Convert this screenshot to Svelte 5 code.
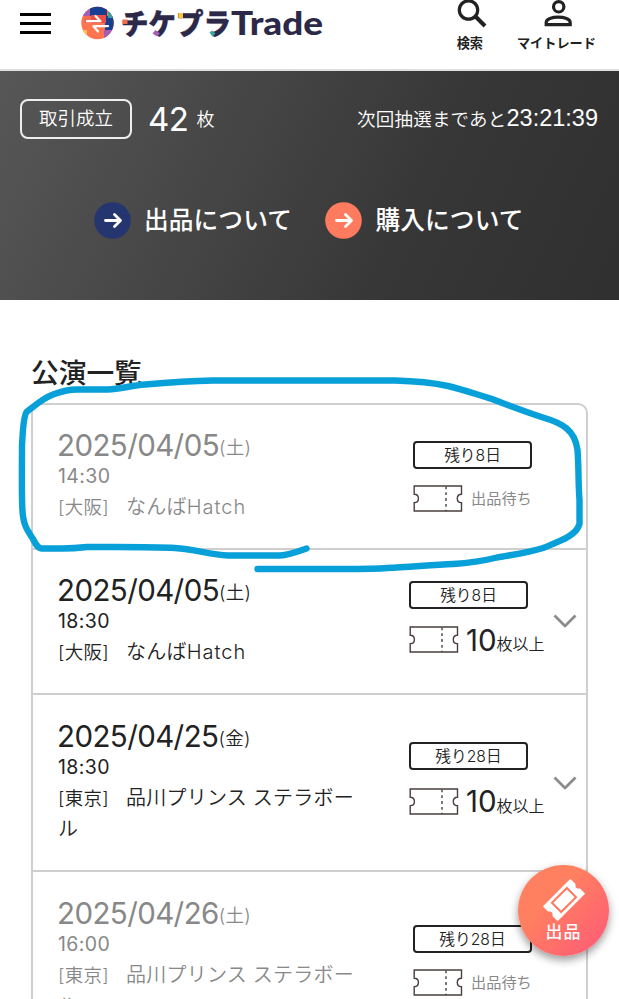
<script>
  const shows = [
    { date: '2025/04/05', day: '土', time: '14:30', area: '大阪', venue: 'なんば', latin: 'Hatch', left: 8, open: false },
    { date: '2025/04/05', day: '土', time: '18:30', area: '大阪', venue: 'なんば', latin: 'Hatch', left: 8, open: true },
    { date: '2025/04/25', day: '金', time: '18:30', area: '東京', venue: '品川プリンス ステラボール', left: 28, open: true },
    { date: '2025/04/26', day: '土', time: '16:00', area: '東京', venue: '品川プリンス ステラボール', left: 28, open: false }
  ];
</script>

{#snippet ticket()}
  <svg class="ticket" width="50" height="27" viewBox="0 0 50 27" fill="none" stroke="#4a3f3d" stroke-width="1.4">
    <path d="M1.200 1H48.500V9.300C45.500 9.300 44.300 11.300 44.300 13.500S45.500 17.700 48.500 17.700V26H1.200V17.700C4.200 17.700 5.400 15.700 5.400 13.500S4.200 9.300 1.200 9.300Z" />
    <path d="M33 1.500V26" stroke-dasharray="2.800 3" />
  </svg>
{/snippet}

{#snippet arrow(color)}
  <svg width="37" height="37" viewBox="0 0 37 37">
    <circle cx="18.5" cy="18.5" r="18.3" fill={color} />
    <path d="M11.500 18.500H26M20.500 12.500L26.500 18.500L20.500 24.500" fill="none" stroke="#fff" stroke-width="2.8" stroke-linecap="round" stroke-linejoin="round" />
  </svg>
{/snippet}

<div class="page">
  <header>
    <div class="burger"><i></i><i></i><i></i></div>
    <svg class="logo" width="246" height="40" viewBox="0 0 246 40">
      <defs><clipPath id="disc"><circle cx="17.5" cy="20" r="16.2" /></clipPath></defs>
      <g clip-path="url(#disc)">
        <rect width="36" height="40" fill="#ff7550" />
        <path d="M0 3H11V13H0Z" fill="#a45db5" />
        <path d="M10 3H27V13H10Z" fill="#173f91" />
        <path d="M25 13H35V27H25Z" fill="#173f91" />
        <path d="M28 9H35V15H28Z" fill="#3d9da0" />
        <path d="M4 13H11V20H4Z" fill="#f16b52" />
        <path d="M11 12H26V20H11Z" fill="#e94d43" />
        <path d="M0 27H7V37H0Z" fill="#ffc44f" />
        <path d="M24 27H35V37H24Z" fill="#a45db5" />
      </g>
      <path d="M7 18.200H20.500L15.500 13M28 23.200H13.500L18 28.500" fill="none" stroke="#fff" stroke-width="2.2" stroke-linecap="round" stroke-linejoin="round" />
      <text class="kana" x="41" y="31.5" textLength="110" lengthAdjust="spacingAndGlyphs">チケプラ</text>
      <text class="latin" x="151" y="32" textLength="92" lengthAdjust="spacingAndGlyphs">Trade</text>
      <path d="M42.500 16.500H47.500V21H42.500Z" fill="#f06b50" />
      <path d="M75.500 27L80 30.500L77 33.500L72.500 30.500Z" fill="#a45db5" />
      <path d="M98.500 10H103V15H98.500Z" fill="#fcc243" />
      <path d="M132 27.500L135.500 30.500L132.500 33.500L129.500 29.500Z" fill="#3da5a5" />
    </svg>
    <nav>
      <div class="tool search">
        <svg width="30" height="28" viewBox="0 0 30 28" fill="none" stroke="#222"><circle cx="11.5" cy="10" r="9.200" stroke-width="3.2" /><path d="M18 16L28 26" stroke-width="4" /></svg>
        <span>検索</span>
      </div>
      <div class="tool mine">
        <svg width="28" height="28" viewBox="0 0 28 28" fill="none" stroke="#222" stroke-width="3.2"><circle cx="14.7" cy="6.800" r="5.200" /><path d="M2.200 24.700H26.200V22.500C26.200 15.200 2.200 15.200 2.200 22.500Z" /></svg>
        <span>マイトレード</span>
      </div>
    </nav>
  </header>

  <section class="hero">
    <div class="stats">
      <span class="deal">取引成立</span>
      <span class="count">42</span>
      <span class="unit">枚</span>
      <span class="next">次回抽選まであと<b>23:21:39</b></span>
    </div>
    <div class="links">
      <span class="link">{@render arrow('#24356f')}<em>出品について</em></span>
      <span class="link">{@render arrow('#ff7b60')}<em>購入について</em></span>
    </div>
  </section>

  <main>
    <h2>公演一覧</h2>
    <ul>
      {#each shows as s}
        <li class:open={s.open}>
          <div class="info">
            <div class="date">{s.date}<small>({s.day})</small></div>
            <div class="time">{s.time}</div>
            <div class="venue"><span class="area">[{s.area}]</span>{s.venue}{#if s.latin}<span class="latin-name">{s.latin}</span>{/if}</div>
          </div>
          <div class="status">
            <div class="badge">残り{s.left}日</div>
            <div class="stock">
              {@render ticket()}
              {#if s.open}
                <span class="num">10</span><span class="more">枚以上</span>
              {:else}
                <span class="wait">出品待ち</span>
              {/if}
            </div>
          </div>
          {#if s.open}
            <svg class="chev" width="24" height="15" viewBox="0 0 24 15" fill="none" stroke="#8c8c8c" stroke-width="2.800"><path d="M1.500 1.500L12 12L22.500 1.500" stroke-linejoin="round" /></svg>
          {/if}
        </li>
      {/each}
    </ul>
  </main>

  <svg class="marker" width="619" height="999" viewBox="0 0 619 999" fill="none" stroke="#07a0d8" stroke-width="6.400" stroke-linecap="round" stroke-linejoin="round">
    <path d="M306.500 548.500C299 551 291 555 280 555.500H228C210 555 195 549 175 548C150 546.500 110 547 87 547C78 548 70 548.500 62 548.500H42C38 548.500 36 545 33 539C27 530 23 525 22.300 508C21.500 490 22 465 22 445C23 430 23 418 26.500 412C33 407 43 398 53 394.500C62 391 70 389.500 77 389.500H108C120 389 132 385.500 145 384.500C168 382.500 190 381 213 380.500H395C415 381 432 382.500 448 386C465 390 478 395 492 399C510 406 526 412 543 417.500C562 423 575 430 577.500 450C579 470 578 480 579.500 500V524C576 536 560 541 543 548C528 553 510 555 497 557.500C483 561 470 563 453 564C432 565 408 567 387 568C377 569 350 569 340 569H257.500" />
  </svg>

  <button class="fab">
    <svg width="42" height="42" viewBox="0 0 42 42">
      <g transform="rotate(-45 21 21)">
        <path d="M2.500 11.500H39.500V17.500A4 4 0 0 0 39.500 24.500V30.500H2.500V24.500A4 4 0 0 0 2.500 17.500Z" fill="#fff" stroke="#fff" stroke-width="2" stroke-linejoin="round" />
        <rect x="10.500" y="14.500" width="21" height="13" fill="none" stroke="#ff7860" stroke-width="2" />
      </g>
    </svg>
    <span>出品</span>
  </button>
</div>

<style>
  :global(body) { margin: 0; background: #fff; }
  .page {
    position: relative; width: 619px; height: 999px; overflow: hidden; background: #fff; color: #222;
    font-family: Inter, 'Noto Sans CJK JP', sans-serif;
  }
  header { box-sizing: border-box; height: 71px; border-bottom: 2px solid #dde0de; display: flex; align-items: flex-start; }
  .burger { margin: 13px 0 0 20px; width: 31px; display: flex; flex-direction: column; gap: 6px; }
  .burger i { height: 3px; background: #000; }
  .logo { margin: 3px 0 0 29px; overflow: visible; }
  .kana { font: 900 29px 'Noto Sans CJK JP', sans-serif; fill: #2c2848; stroke: #2c2848; stroke-width: .4px; }
  .latin { font: 900 32px Lato, sans-serif; fill: #2c2848; }
  nav { display: flex; margin-left: auto; margin-right: 23px; }
  .tool { display: flex; flex-direction: column; align-items: center; font-weight: 700; font-size: 13.200px; line-height: 18px; }
  .tool span { margin-top: 6px; white-space: nowrap; }
  .search { margin-right: 30px; }
  .search svg { margin-left: 4px; }
  .mine svg { margin-left: 3px; }
  .hero { height: 229px; background: linear-gradient(115deg, #575757 0%, #464646 35%, #363636 68%, #303030 100%); color: #fff; overflow: hidden; }
  .stats { display: flex; align-items: center; height: 40px; margin: 28px 21px 0 20px; }
  .deal { box-sizing: border-box; width: 112px; height: 40px; border: 2px solid #eee; border-radius: 8px; text-align: center; font-size: 18.500px; line-height: 35px; font-weight: 350; }
  .count { font-size: 33px; margin-left: 16px; letter-spacing: -0.500px; }
  .unit { font-size: 18px; font-weight: 350; margin: -2px 0 0 8px; }
  .next { margin: -2px 0 0 auto; font-size: 18.500px; font-weight: 350; letter-spacing: .2px; white-space: nowrap; }
  .next b { font: 400 23.500px 'Liberation Sans', sans-serif; letter-spacing: 0; }
  .links { display: flex; margin: 63px 0 0 94px; gap: 33.500px; }
  .link { display: flex; align-items: center; height: 37px; }
  em { font: 500 24.700px/37px 'Noto Sans CJK JP', sans-serif; margin: -5px 0 0 13px; letter-spacing: .1px; }
  main { padding: 0 31px 0 32px; }
  h2 { margin: 53px 0 0 -1px; height: 50px; font-size: 27.700px; line-height: 40px; font-weight: 500; }
  ul { list-style: none; margin: 0 0 0 -1px; padding: 0; border: 2px solid #cfcfcf; border-radius: 10px; height: 660px; }
  li { display: flex; align-items: center; padding: 26px 54px 25px 25px; border-bottom: 2px solid #cfcfcf; }
  li:first-child, li:nth-child(2) { padding-top: 25px; }
  li.open { padding-right: 10px; }
  .info { width: 306px; color: #888; }
  .open .info { color: #222; }
  .info > div { line-height: 31px; }
  .date { font-size: 29.500px; white-space: nowrap; height: 31px; letter-spacing: -.6px; margin-left: -1px; }
  .date small { font-size: 18.500px; font-weight: 350; letter-spacing: .3px; position: relative; top: -2px; }
  .time { font-size: 19.500px; height: 31px; letter-spacing: .4px; }
  .venue { font-size: 20px; font-weight: 350; letter-spacing: .25px; }
  .area { font-size: 18.500px; margin-right: 17px; }
  .latin-name { letter-spacing: 1px; }
  .status { margin-left: auto; width: 119px; color: #222; }
  .open .status { width: 137px; margin-left: 0; flex: none; margin-right: 7px; }
  .open .info { width: 307px; margin-right: 44px; flex: none; }
  .badge { box-sizing: border-box; width: 119px; height: 28px; border: 2px solid #222; border-radius: 4px; font-size: 15.700px; line-height: 25px; text-align: center; font-weight: 350; }
  .stock { display: flex; align-items: center; margin-top: 16px; height: 27px; white-space: nowrap; }
  .open .stock { margin-top: 8px; height: 46px; }
  .ticket { flex: none; }
  .wait { font-size: 15.200px; color: #888; margin: -3px 0 0 8px; }
  .num { font-size: 29.500px; margin-left: 7px; }
  .more { font-size: 16px; padding-top: 7px; font-weight: 350; }
  .chev { flex: none; }
  .marker { position: absolute; left: 0; top: 0; pointer-events: none; }
  .fab {
    position: absolute; left: 518px; top: 865px; width: 91px; height: 91px; padding: 14px 0 0; border: 0; border-radius: 50%;
    display: flex; flex-direction: column; align-items: center; color: #fff;
    background: linear-gradient(135deg, #ff8060 35%, #ff5878 100%); box-shadow: 0 4px 8px rgba(0, 0, 0, .4);
    font: 500 17px/20px 'Noto Sans CJK JP', sans-serif; letter-spacing: 1px;
  }
</style>
